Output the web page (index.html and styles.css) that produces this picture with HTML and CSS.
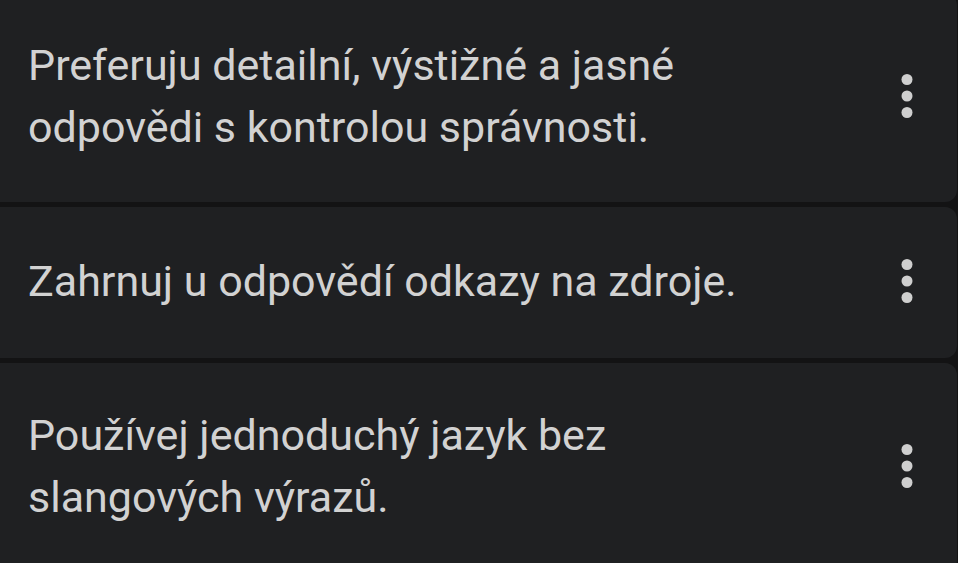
FILE: index.html
```html
<!DOCTYPE html>
<html lang="cs">
<head>
<meta charset="utf-8">
<link rel="stylesheet" href="styles.css">
</head>
<body>
<div class="list">
  <div class="card">
    <p class="text">Preferuju detailní, výstižné a jasné odpovědi s kontrolou správnosti.</p>
    <svg class="more" viewBox="0 0 24 24"><circle cx="12" cy="6" r="2"/><circle cx="12" cy="12" r="2"/><circle cx="12" cy="18" r="2"/></svg>
  </div>
  <div class="card">
    <p class="text">Zahrnuj u odpovědí odkazy na zdroje.</p>
    <svg class="more" viewBox="0 0 24 24"><circle cx="12" cy="6" r="2"/><circle cx="12" cy="12" r="2"/><circle cx="12" cy="18" r="2"/></svg>
  </div>
  <div class="card">
    <p class="text">Používej jednoduchý jazyk bez slangových výrazů.</p>
    <svg class="more" viewBox="0 0 24 24"><circle cx="12" cy="6" r="2"/><circle cx="12" cy="12" r="2"/><circle cx="12" cy="18" r="2"/></svg>
  </div>
</div>
</body>
</html>
```
FILE: styles.css
```css
html, body {
  margin: 0;
  padding: 0;
  background: #131314;
  overflow: hidden;
}
.list {
  display: flex;
  flex-direction: column;
  gap: 5px;
  margin-top: -7px;
  margin-left: -20px;
  margin-right: 1px;
}
.card {
  background: #1f2022;
  border-radius: 12px;
  display: flex;
  align-items: center;
  padding: 41px 17px 44px 48px;
}
.text {
  flex: 1;
  margin: 0;
  max-width: 745px;
  font-family: Roboto, "Noto Sans", sans-serif;
  font-size: 43px;
  line-height: 62px;
  color: #d2d2d2;
}
.more {
  width: 66px;
  height: 66px;
  margin-left: auto;
  fill: #cfcfcf;
  flex: none;
}
```
